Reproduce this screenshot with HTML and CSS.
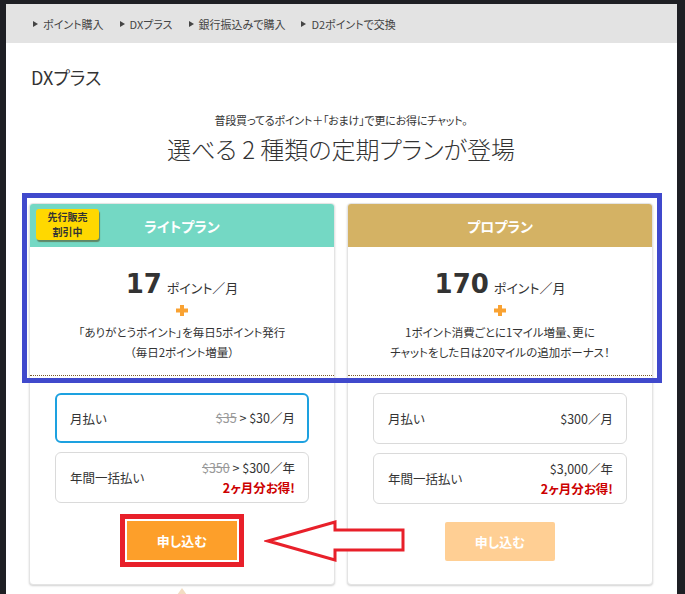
FILE: index.html
```html
<!DOCTYPE html>
<html lang="ja">
<head>
<meta charset="utf-8">
<title>DXプラス</title>
<link rel="stylesheet" href="styles.css">
</head>
<body>
<div class="page">
  <nav class="crumbs">
    <a class="crumb">ポイント購入</a>
    <a class="crumb">DXプラス</a>
    <a class="crumb">銀行振込みで購入</a>
    <a class="crumb">D2ポイントで交換</a>
  </nav>
  <main class="content">
    <h1 class="page-title">DXプラス</h1>
    <p class="lead">普段買ってるポイント＋「おまけ」で更にお得にチャット。</p>
    <h2 class="headline">選べる 2 種類の定期プランが登場</h2>
    <div class="plans">
      <section class="plan">
        <header class="plan-head lite"><span class="badge"><span>先行販売</span><span>割引中</span></span>ライトプラン</header>
        <div class="plan-info">
          <div class="amount"><span class="num">17</span><span class="unit">ポイント／月</span></div>
          <div class="plus"><svg width="12" height="11" viewBox="0 0 12 11"><rect x="4" y="0" width="4" height="11" fill="#f9a232"/><rect x="0" y="3.5" width="12" height="4" fill="#f9a232"/></svg></div>
          <p class="desc">「ありがとうポイント」を毎日5ポイント発行<br>（毎日2ポイント増量）</p>
        </div>
        <div class="plan-buy">
          <div class="option selected">
            <span class="opt-label">月払い</span>
            <span class="opt-price"><span><s class="old">$35</s> &gt; $30／月</span></span>
          </div>
          <div class="option">
            <span class="opt-label">年間一括払い</span>
            <span class="opt-price"><span><s class="old">$350</s> &gt; $300／年</span><strong class="save">2ヶ月分お得!</strong></span>
          </div>
          <button class="apply">申し込む</button>
        </div>
      </section>
      <section class="plan">
        <header class="plan-head pro">プロプラン</header>
        <div class="plan-info">
          <div class="amount"><span class="num">170</span><span class="unit">ポイント／月</span></div>
          <div class="plus"><svg width="12" height="11" viewBox="0 0 12 11"><rect x="4" y="0" width="4" height="11" fill="#f9a232"/><rect x="0" y="3.5" width="12" height="4" fill="#f9a232"/></svg></div>
          <p class="desc">1ポイント消費ごとに1マイル増量、更に<br>チャットをした日は20マイルの追加ボーナス！</p>
        </div>
        <div class="plan-buy">
          <div class="option">
            <span class="opt-label">月払い</span>
            <span class="opt-price"><span>$300／月</span></span>
          </div>
          <div class="option">
            <span class="opt-label">年間一括払い</span>
            <span class="opt-price"><span>$3,000／年</span><strong class="save">2ヶ月分お得!</strong></span>
          </div>
          <button class="apply disabled">申し込む</button>
        </div>
      </section>
    </div>
  </main>
</div>
<div class="mark-box"></div>
<svg class="mark-arrow" width="142" height="48" viewBox="0 0 142 48"><polygon points="4,24 71,5 71,13 139,13 139,33 71,33 71,43" fill="#fff" stroke="#e8202a" stroke-width="3" stroke-linejoin="miter"/></svg>
<div class="pointer"></div>
</body>
</html>
```
FILE: styles.css
```css
html, body {
  margin: 0;
  padding: 0;
}
body {
  background: #1e1f24;
  width: 685px;
  height: 594px;
  overflow: hidden;
  position: relative;
  font-family: "Noto Sans CJK JP", "Noto Sans", sans-serif;
  font-feature-settings: "palt";
  color: #333;
}
.page {
  margin: 4px 8px 0 6px;
  background: #fff;
  height: 590px;
}
.crumbs {
  height: 39px;
  background: #e3e3e3;
  display: flex;
  align-items: center;
  gap: 16px;
  padding-left: 27px;
  font-size: 11px;
  color: #444;
}
.crumb {
  display: flex;
  align-items: center;
  gap: 5px;
}
.crumb::before {
  content: "";
  width: 0;
  height: 0;
  border-left: 5px solid #444;
  border-top: 3.5px solid transparent;
  border-bottom: 3.5px solid transparent;
}
.content {
  padding: 0 24px 0 23px;
}
.page-title {
  margin: 22px 0 0 2px;
  font-size: 18px;
  line-height: 24px;
  font-weight: 400;
}
.lead {
  margin: 22px 0 0;
  text-align: center;
  font-size: 11px;
  letter-spacing: -0.2px;
  line-height: 18px;
}
.headline {
  margin: 4px 0 0;
  text-align: center;
  font-size: 24px;
  line-height: 32px;
  font-weight: 300;
}
.plans {
  margin-top: 38px;
  display: grid;
  grid-template-columns: 1fr 1fr;
  gap: 12px;
}
.plan {
  border: 1px solid #e4e4e4;
  border-radius: 4px;
  box-shadow: 0 1px 2px rgba(0,0,0,0.18);
  background: #fff;
}
.plan-head {
  position: relative;
  height: 43px;
  display: flex;
  align-items: center;
  justify-content: center;
  color: #fff;
  font-weight: 700;
  font-size: 14px;
  border-radius: 3px 3px 0 0;
}
.plan-head.lite { background: #74d8c4; }
.plan-head.pro { background: #d4b264; }
.badge {
  position: absolute;
  left: 6px;
  top: 5px;
  width: 63px;
  height: 31px;
  box-sizing: border-box;
  background: #ffd800;
  border-radius: 3px;
  box-shadow: 1px 2px 1px rgba(80,80,40,0.6);
  color: #333;
  font-size: 10px;
  line-height: 14.5px;
  display: flex;
  flex-direction: column;
  align-items: center;
  justify-content: center;
  text-align: center;
}
.plan-info {
  padding: 20px 0 13px;
  border-bottom: 1px dotted #7a5a2a;
  text-align: center;
}
.amount {
  height: 34px;
  display: flex;
  align-items: baseline;
  justify-content: center;
  gap: 5px;
}
.num {
  font-family: "DejaVu Sans", sans-serif;
  font-weight: 700;
  font-size: 26px;
  line-height: 34px;
}
.unit {
  font-size: 13px;
}
.plus {
  height: 18px;
  display: flex;
  align-items: center;
  justify-content: center;
}
.desc {
  margin: 3px 0 0;
  font-size: 11.5px;
  line-height: 20px;
}
.plan-buy {
  padding: 17px 25px 23px;
  display: flex;
  flex-direction: column;
  align-items: stretch;
}
.option {
  box-sizing: border-box;
  height: 51px;
  border: 1px solid #dadada;
  border-radius: 6px;
  display: flex;
  align-items: center;
  justify-content: space-between;
  padding: 0 13px 0 14px;
  font-size: 12.5px;
}
.option + .option { margin-top: 9px; }
.option.selected {
  height: 50px;
  border: 2px solid #1da1e0;
  padding: 0 12px 0 13px;
}
.opt-price {
  display: flex;
  flex-direction: column;
  align-items: flex-end;
  line-height: 20px;
}
.old {
  color: #999;
}
.save {
  color: #cc0000;
  font-weight: 700;
  font-size: 12.5px;
}
.apply {
  margin: 18px auto 0;
  width: 110px;
  height: 39px;
  border: 0;
  border-radius: 0;
  background: #fd9f2a;
  color: #fff;
  font-family: inherit;
  font-feature-settings: "palt";
  font-weight: 700;
  font-size: 13px;
  outline: 5px solid #e8202a;
  outline-offset: 2px;
}
.apply.disabled {
  border-radius: 2px;
  background: #ffcf94;
  outline: none;
}
.mark-box {
  position: absolute;
  left: 22px;
  top: 193px;
  width: 640px;
  height: 190px;
  box-sizing: border-box;
  border: 5px solid #4049cc;
  pointer-events: none;
}
.mark-arrow {
  position: absolute;
  left: 264px;
  top: 517px;
}
.pointer {
  position: absolute;
  left: 177px;
  top: 588px;
  width: 0;
  height: 0;
  border-left: 5px solid transparent;
  border-right: 5px solid transparent;
  border-bottom: 7px solid #f3dcc2;
}
```
